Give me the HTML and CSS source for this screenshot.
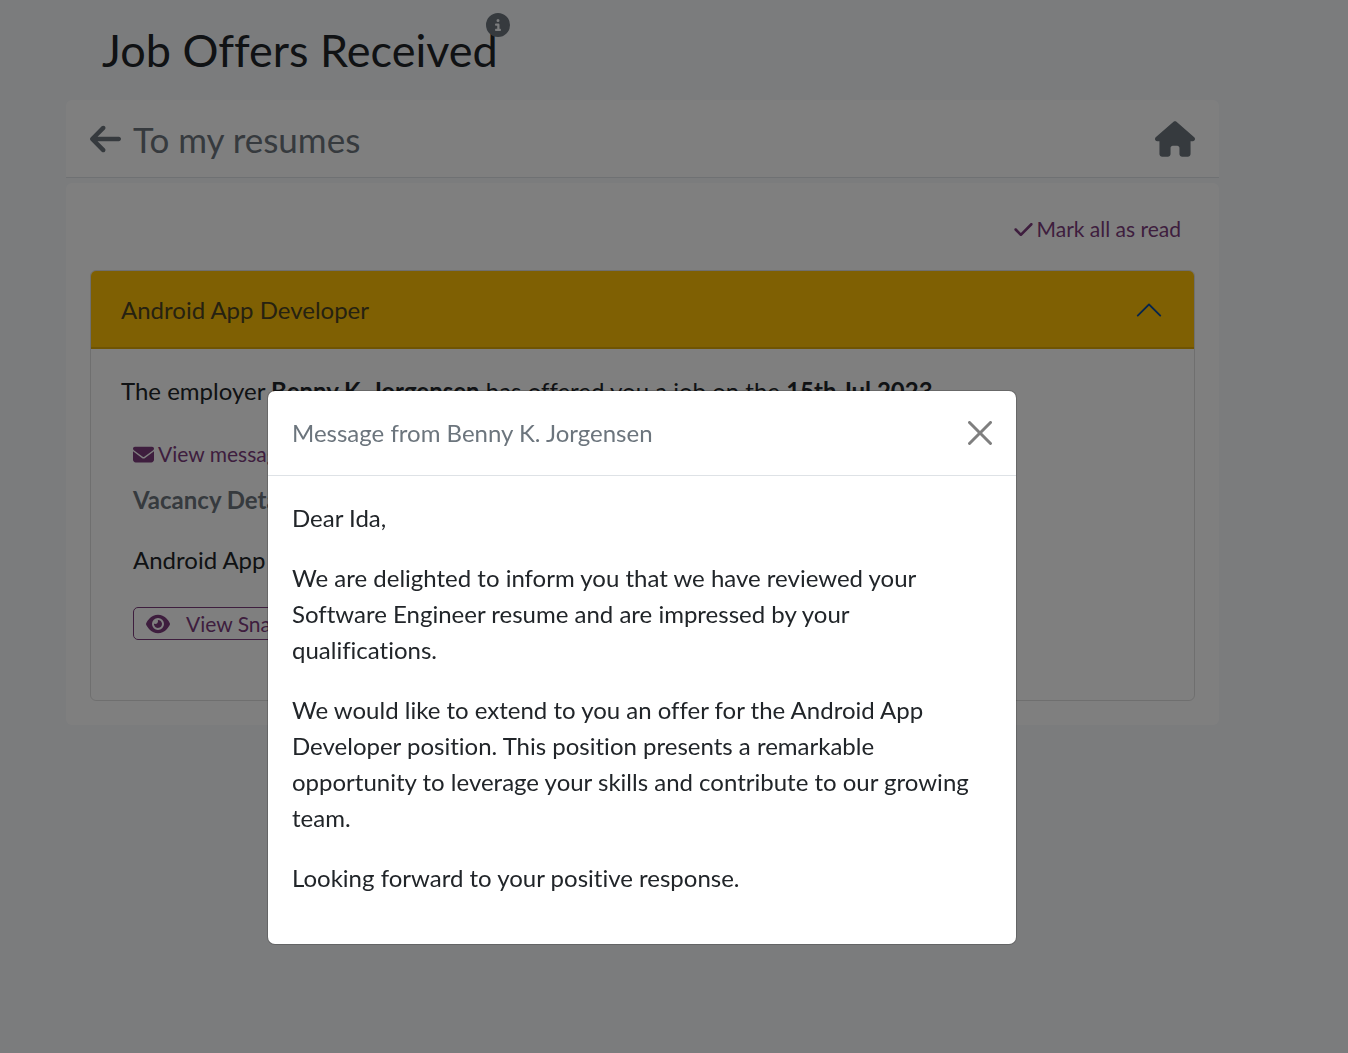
FILE: index.html
```html
<!DOCTYPE html>
<html lang="en">
<head>
<meta charset="utf-8">
<meta name="viewport" content="width=device-width, initial-scale=1">
<title>Job Offers Received</title>
<link rel="stylesheet" href="styles.css">
</head>
<body>
<main class="page">
  <header class="page-header">
    <h1 class="page-title">Job Offers Received<button class="info" type="button" aria-label="Information"><svg viewBox="0 0 512 512"><path d="M256 512A256 256 0 1 0 256 0a256 256 0 1 0 0 512zM216 336h24V272H216c-13.300 0-24-10.700-24-24s10.700-24 24-24h48c13.300 0 24 10.700 24 24v88h8c13.300 0 24 10.700 24 24s-10.700 24-24 24H216c-13.300 0-24-10.700-24-24s10.700-24 24-24zm40-208a32 32 0 1 1 0 64 32 32 0 1 1 0-64z"/></svg></button></h1>
  </header>
  <nav class="toolbar">
    <a class="back" href="#resumes"><svg class="icon-arrow" viewBox="0 0 448 512"><path d="M9.400 233.400c-12.500 12.500-12.500 32.800 0 45.300l160 160c12.500 12.500 32.800 12.500 45.300 0s12.500-32.800 0-45.300L109.200 288H416c17.700 0 32-14.300 32-32s-14.300-32-32-32H109.300L214.600 118.600c12.500-12.500 12.500-32.800 0-45.300s-32.800-12.500-45.300 0l-160 160z"/></svg>To my resumes</a>
    <a class="home" href="#home" aria-label="Home"><svg class="icon-home" viewBox="0 0 576 512"><path d="M575.800 255.500c0 18-15 32.100-32 32.100h-32l.7 160.200c0 2.700-.2 5.400-.5 8.100V472c0 22.100-17.900 40-40 40H456c-1.100 0-2.200 0-3.300-.1c-1.400 .1-2.800 .1-4.200 .1H392c-22.100 0-40-17.900-40-40V384c0-17.700-14.300-32-32-32H256c-17.700 0-32 14.300-32 32v88c0 22.100-17.900 40-40 40H104c-22.100 0-40-17.900-40-40V287.600H32c-18 0-32-14-32-32.100c0-9 3-17 10-24L266.400 8c7-7 15-8 22-8s15 2 21 7L564.800 231.500c8 7 12 15 11 24z"/></svg></a>
  </nav>
  <section class="panel">
    <div class="panel-actions">
      <button class="link" type="button"><svg class="icon-check" viewBox="0 0 448 512"><path d="M438.600 105.400c12.500 12.500 12.500 32.800 0 45.300l-256 256c-12.500 12.500-32.800 12.500-45.300 0l-128-128c-12.500-12.500-12.500-32.800 0-45.300s32.800-12.500 45.300 0L160 338.700 393.400 105.400c12.500-12.500 32.800-12.500 45.300 0z"/></svg>Mark all as read</button>
    </div>
    <article class="accordion">
      <h2 class="accordion-heading"><button class="accordion-toggle" type="button" aria-expanded="true" aria-controls="offer"><span>Android App Developer</span><svg class="icon-chevron" viewBox="0 0 16 16"><path d="M1.646 11.354a.5.5 0 0 0 .708 0L8 5.707l5.646 5.647a.5.5 0 0 0 .708-.708l-6-6a.5.5 0 0 0-.708 0l-6 6a.5.5 0 0 0 0 .708z"/></svg></button></h2>
      <div class="accordion-body" id="offer">
        <p class="summary">The employer <strong>Benny K. Jorgensen</strong> has offered you a job on the <strong>15th Jul 2023</strong></p>
        <div class="details">
          <button class="link" type="button"><svg class="icon-mail" viewBox="0 0 512 512"><path d="M48 64C21.500 64 0 85.500 0 112c0 15.100 7.100 29.300 19.200 38.400L236.800 313.600c11.400 8.500 27 8.500 38.400 0L492.800 150.400c12.100-9.100 19.200-23.300 19.200-38.400c0-26.500-21.500-48-48-48H48zM0 176V384c0 35.300 28.700 64 64 64H448c35.300 0 64-28.700 64-64V176L294.400 339.200c-22.800 17.100-54 17.100-76.800 0L0 176z"/></svg>View message</button>
          <h3 class="details-title">Vacancy Details</h3>
          <p class="vacancy">Android App Developer</p>
          <button class="outline" type="button"><svg class="icon-eye" viewBox="0 0 576 512"><path d="M288 32c-80.800 0-145.500 36.800-192.600 80.600C48.600 156 17.300 208 2.500 243.700c-3.300 7.900-3.300 16.700 0 24.600C17.300 304 48.600 356 95.400 399.400C142.500 443.200 207.200 480 288 480s145.500-36.800 192.600-80.600c46.800-43.500 78.100-95.400 93-131.100c3.300-7.900 3.300-16.700 0-24.600c-14.900-35.700-46.200-87.700-93-131.100C433.500 68.800 368.800 32 288 32zM144 256a144 144 0 1 1 288 0 144 144 0 1 1 -288 0zm144-64c0 35.300-28.700 64-64 64c-7.100 0-13.900-1.200-20.300-3.300c-5.500-1.800-11.900 1.600-11.700 7.400c.3 6.900 1.300 13.800 3.200 20.700c13.700 51.200 66.400 81.600 117.600 67.900s81.600-66.400 67.900-117.600c-11.100-41.500-47.800-69.400-88.600-71.100c-5.800-.2-9.200 6.100-7.400 11.700c2.100 6.400 3.300 13.200 3.300 20.300z"/></svg>View Snapshot</button>
        </div>
      </div>
    </article>
  </section>
</main>
<div class="backdrop">
  <div class="modal" role="dialog" aria-modal="true" aria-labelledby="modal-title">
    <header class="modal-header">
      <h2 class="modal-title" id="modal-title">Message from Benny K. Jorgensen</h2>
      <button class="close" type="button" aria-label="Close"><svg viewBox="0 0 16 16"><path d="M.293.293a1 1 0 0 1 1.414 0L8 6.586 14.293.293a1 1 0 1 1 1.414 1.414L9.414 8l6.293 6.293a1 1 0 0 1-1.414 1.414L8 9.414l-6.293 6.293a1 1 0 0 1-1.414-1.414L6.586 8 .293 1.707a1 1 0 0 1 0-1.414z"/></svg></button>
    </header>
    <div class="modal-body">
      <p>Dear Ida,</p>
      <p>We are delighted to inform you that we have reviewed your Software Engineer resume and are impressed by your qualifications.</p>
      <p>We would like to extend to you an offer for the Android App Developer position. This position presents a remarkable opportunity to leverage your skills and contribute to our growing team.</p>
      <p>Looking forward to your positive response.</p>
    </div>
  </div>
</div>
</body>
</html>
```
FILE: styles.css
```css
* {
  box-sizing: border-box;
}

body {
  margin: 0;
  min-height: 100vh;
  background: #f6f8fb;
  color: #212529;
  font-family: Lato, "Liberation Sans", sans-serif;
  font-size: 24px;
  font-variant-ligatures: none;
  line-height: 36px;
}

h1, h2, h3, p {
  margin: 0;
  font-size: 24px;
  font-weight: 400;
}

button {
  padding: 0;
  border: 0;
  background: none;
  color: inherit;
  font: inherit;
  font-variant-ligatures: none;
  cursor: pointer;
}

svg {
  display: block;
  fill: currentColor;
}

.page {
  padding: 0 129px 0 66px;
}

.page-header {
  display: flex;
  padding: 22px 36px;
}

.page-title {
  position: relative;
  font-size: 45px;
  line-height: 56px;
}

.info {
  position: absolute;
  top: -9px;
  right: -12px;
  color: #6c757d;
}

.info svg {
  width: 24px;
  height: 24px;
}

.toolbar {
  display: flex;
  align-items: center;
  justify-content: space-between;
  height: 78px;
  padding: 0 24px;
  border-bottom: 1px solid #dee2e6;
  border-radius: 6px 6px 0 0;
  background: #fff;
  color: #6c757d;
}

.back {
  display: flex;
  align-items: center;
  gap: 12px;
  color: inherit;
  font-size: 35px;
  text-decoration: none;
}

.icon-arrow {
  width: 31px;
  height: 36px;
}

.home {
  color: inherit;
}

.icon-home {
  width: 40px;
  height: 36px;
}

.panel {
  margin-top: 5px;
  padding: 24px;
  border-radius: 6px;
  background: #fff;
}

.panel-actions {
  display: flex;
  justify-content: flex-end;
  padding: 4px 14px 23px;
}

.link {
  display: flex;
  align-items: center;
  gap: 4px;
  color: #7d3c7d;
  font-size: 21px;
}

.icon-check {
  width: 19px;
  height: 21px;
}

.icon-mail {
  width: 21px;
  height: 21px;
}

.accordion {
  border: 1px solid #dfdfdf;
  border-radius: 6px;
  overflow: hidden;
}

.accordion-toggle {
  display: flex;
  align-items: center;
  justify-content: space-between;
  width: 100%;
  height: 78px;
  padding: 0 30px;
  background: #ffc107;
  box-shadow: inset 0 -2px 0 #dfa906;
}

.accordion-toggle span {
  opacity: 0.8;
}

.icon-chevron {
  width: 30px;
  height: 30px;
  color: #0c4a9a;
}

.accordion-body {
  padding: 24px 30px 60px;
}

.details {
  display: flex;
  flex-direction: column;
  align-items: flex-start;
  padding: 27px 12px 0;
}

.details-title {
  margin: 10px 0 24px;
  color: #6c757d;
  font-weight: 700;
}

.vacancy {
  margin-bottom: 29px;
}

.outline {
  display: flex;
  align-items: center;
  gap: 16px;
  height: 33px;
  padding: 0 12px;
  border: 1px solid #7d3c7d;
  border-radius: 5px;
  color: #7d3c7d;
  font-size: 21px;
}

.icon-eye {
  width: 24px;
  height: 24px;
}

.backdrop {
  position: fixed;
  inset: 0;
  padding: 391px 64px 24px 0;
  background: rgba(0, 0, 0, 0.5);
  overflow: auto;
}

.modal {
  max-width: 748px;
  margin: 0 auto;
  border-radius: 7px;
  background: #fff;
  box-shadow: 0 0 0 1px rgba(0, 0, 0, 0.18);
}

.modal-header {
  display: flex;
  align-items: center;
  justify-content: space-between;
  padding: 24px;
  border-bottom: 1px solid #dee2e6;
}

.modal-title {
  color: #6c757d;
}

.close {
  color: #7f7f7f;
}

.close svg {
  width: 24px;
  height: 24px;
}

.modal-body {
  padding: 24px;
}

.modal-body p {
  margin-bottom: 24px;
}

.modal-body p:last-child {
  padding-bottom: 24px;
  margin-bottom: 0;
}
```
